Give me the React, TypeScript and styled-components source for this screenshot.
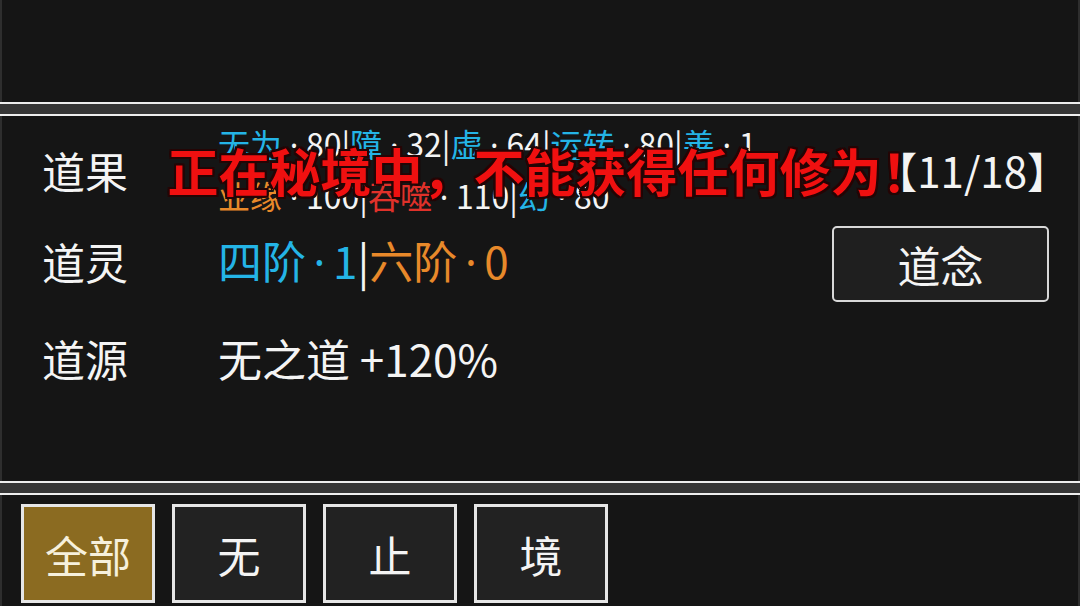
import styled, { createGlobalStyle } from 'styled-components';
import React from 'react';

const GlobalStyle = createGlobalStyle`
  html, body {
    margin: 0;
    padding: 0;
    background: #2e2e2e;
  }
  * {
    box-sizing: border-box;
  }
  body {
    font-family: 'Noto Sans CJK SC', 'Noto Sans', sans-serif;
    color: #f2f2f2;
  }
`;

type Tone = 'cyan' | 'orange' | 'red';
type Stat = { name: string; value: number; color: Tone };

const COLORS: Record<Tone, string> = {
  cyan: '#24b4e6',
  orange: '#e8892a',
  red: '#e0312a',
};

const fruitLines: Stat[][] = [
  [
    { name: '无为', value: 80, color: 'cyan' },
    { name: '障', value: 32, color: 'cyan' },
    { name: '虚', value: 64, color: 'cyan' },
    { name: '运转', value: 80, color: 'cyan' },
    { name: '善', value: 1, color: 'cyan' },
  ],
  [
    { name: '业缘', value: 100, color: 'orange' },
    { name: '吞噬', value: 110, color: 'red' },
    { name: '幻', value: 80, color: 'cyan' },
  ],
];

const spirits: Stat[] = [
  { name: '四阶', value: 1, color: 'cyan' },
  { name: '六阶', value: 0, color: 'orange' },
];

const tabs = ['全部', '无', '止', '境'];

// 名称着色，数值白色
function StatList({ stats }: { stats: Stat[] }) {
  return (
    <>
      {stats.map((s, i) => (
        <React.Fragment key={s.name}>
          {i > 0 && '|'}
          <Tint $color={s.color}>{s.name}</Tint>
          <Dot $w={24}>·</Dot>
          {s.value}
        </React.Fragment>
      ))}
    </>
  );
}

// 名称与数值同色
function SpiritList({ stats }: { stats: Stat[] }) {
  return (
    <>
      {stats.map((s, i) => (
        <React.Fragment key={s.name}>
          {i > 0 && '|'}
          <Tint $color={s.color}>
            {s.name}
            <Dot $w={27}>·</Dot>
            {s.value}
          </Tint>
        </React.Fragment>
      ))}
    </>
  );
}

export default function App() {
  return (
    <>
      <GlobalStyle />
      <Screen>
        <TopPanel />
        <Divider />
        <MainPanel>
          <Row>
            <Label>道果</Label>
            <FruitBlock>
              {fruitLines.map((line, i) => (
                <FruitLine key={i}>
                  <StatList stats={line} />
                </FruitLine>
              ))}
            </FruitBlock>
            <Count>【11/18】</Count>
          </Row>
          <Row>
            <Label>道灵</Label>
            <Value>
              <SpiritList stats={spirits} />
            </Value>
            <ThoughtBtn>道念</ThoughtBtn>
          </Row>
          <Row>
            <Label>道源</Label>
            <Value>无之道 +120%</Value>
          </Row>
          <Warning>正在秘境中，不能获得任何修为！</Warning>
        </MainPanel>
        <Divider />
        <TabBar>
          {tabs.map((t, i) => (
            <Tab key={t} $active={i === 0}>
              {t}
            </Tab>
          ))}
        </TabBar>
      </Screen>
    </>
  );
}

const Screen = styled.div`
  width: 1080px;
  height: 606px;
  display: flex;
  flex-direction: column;
  overflow: hidden;
`;

const Panel = styled.div`
  margin: 0 2px;
  background: #151515;
`;

const TopPanel = styled(Panel)`
  height: 102px;
`;

const Divider = styled.div`
  height: 14px;
  border-top: 2px solid #eeeeee;
  border-bottom: 2px solid #eeeeee;
  background: #363636;
`;

const MainPanel = styled(Panel)`
  position: relative;
  height: 365px;
  padding: 4px 29px 0 40px;
  display: grid;
  grid-template-rows: 100px 82px 112px;
`;

const Row = styled.div`
  display: flex;
  align-items: center;
`;

const Label = styled.div`
  width: 176px;
  flex-shrink: 0;
  font-size: 43px;
  line-height: 1;
  color: #f4f4f4;
`;

const FruitBlock = styled.div`
  flex: 1;
  display: flex;
  flex-direction: column;
`;

const FruitLine = styled.div`
  font-size: 32px;
  line-height: 50px;
  white-space: nowrap;
  color: #f4f4f4;
`;

const Tint = styled.span<{ $color?: Tone }>`
  color: ${({ $color }) => ($color ? COLORS[$color] : 'inherit')};
`;

const Dot = styled.span<{ $w: number }>`
  display: inline-block;
  width: ${({ $w }) => $w}px;
  text-align: center;
  font-family: 'Noto Sans', sans-serif;
`;

const Count = styled.div`
  font-size: 42px;
  line-height: 1;
  margin-right: -20px;
  color: #f4f4f4;
  white-space: nowrap;
`;

const Value = styled.div`
  flex: 1;
  font-size: 44px;
  line-height: 1;
  color: #f4f4f4;
  white-space: nowrap;
`;

const ThoughtBtn = styled.button`
  width: 217px;
  height: 76px;
  margin-top: 5px;
  font-family: inherit;
  font-size: 43px;
  color: #f4f4f4;
  background: #1f1f1f;
  border: 2px solid #d8d8d8;
  border-radius: 5px;
  padding: 0;
`;

const Warning = styled.div`
  position: absolute;
  left: 0;
  right: 0;
  top: 26px;
  padding-left: 20px;
  text-align: center;
  font-size: 51px;
  font-weight: 700;
  line-height: 56px;
  color: #f01010;
  pointer-events: none;
  text-shadow:
    2px 0 0 #240505,
    -2px 0 0 #240505,
    0 2px 0 #240505,
    0 -2px 0 #240505,
    2px 2px 0 #240505,
    -2px -2px 0 #240505,
    2px -2px 0 #240505,
    -2px 2px 0 #240505;
`;

const TabBar = styled(Panel)`
  flex: 1;
  display: flex;
  gap: 17px;
  padding: 9px 0 0 19px;
`;

const Tab = styled.button<{ $active?: boolean }>`
  width: 134px;
  height: 99px;
  padding: 0;
  font-family: inherit;
  font-size: 43px;
  color: ${({ $active }) => ($active ? '#f6f0dc' : '#f4f4f4')};
  background: ${({ $active }) => ($active ? '#8b6b21' : '#222222')};
  border: 3px solid #e6e6e6;
  border-radius: 0;
`;
